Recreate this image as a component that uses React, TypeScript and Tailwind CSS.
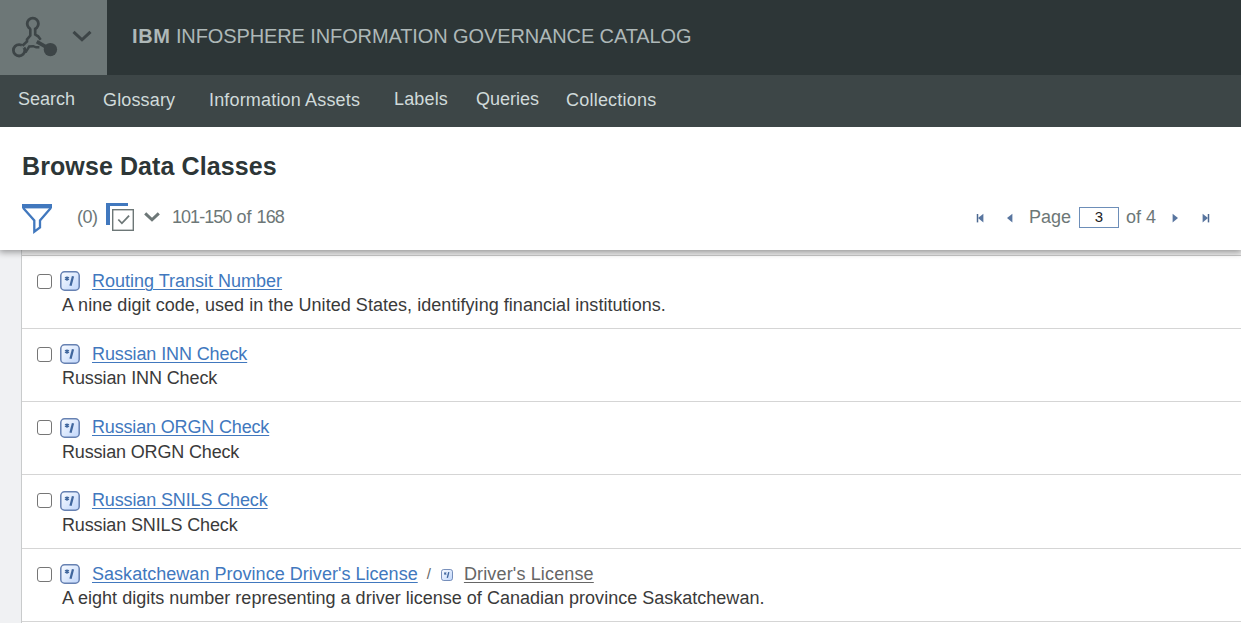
import React from 'react';

type DataClass = { name: string; text: string; parent?: string; nameClass: string; textClass: string; rowClass: string; iconClass: string };

const rows: DataClass[] = [
  { name: 'Routing Transit Number', text: 'A nine digit code, used in the United States, identifying financial institutions.', nameClass: '', textClass: 'tracking-[0.043px]', rowClass: 'h-[73px]', iconClass: 'ml-2' },
  { name: 'Russian INN Check', text: 'Russian INN Check', nameClass: 'tracking-[-0.11px]', textClass: 'tracking-[-0.11px]', rowClass: 'h-[73px]', iconClass: 'ml-2' },
  { name: 'Russian ORGN Check', text: 'Russian ORGN Check', nameClass: 'tracking-[-0.16px]', textClass: 'mt-px tracking-[-0.16px]', rowClass: 'h-[73px]', iconClass: 'ml-2 mt-0.5' },
  { name: 'Russian SNILS Check', text: 'Russian SNILS Check', nameClass: 'tracking-[-0.13px]', textClass: 'mt-px tracking-[-0.13px]', rowClass: 'h-[74px]', iconClass: 'ml-2 mt-0.5' },
  { name: "Saskatchewan Province Driver's License", text: 'A eight digits number representing a driver license of Canadian province Saskatchewan.', parent: "Driver's License", nameClass: 'tracking-[0.03px]', textClass: 'tracking-[0.012px]', rowClass: 'h-[73px]', iconClass: 'ml-2' },
];

const nav = [
  { label: 'Search', className: 'w-[85px] pb-px' },
  { label: 'Glossary', className: 'w-[106px] pt-px tracking-[0.15px]' },
  { label: 'Information Assets', className: 'w-[185px] pt-px tracking-[0.17px]' },
  { label: 'Labels', className: 'w-[82px] pb-px tracking-[0.15px]' },
  { label: 'Queries', className: 'w-[90px] pb-px' },
  { label: 'Collections', className: 'pt-px tracking-[0.22px]' },
];

function Logo() {
  return (
    <svg width="46" height="42" viewBox="0 0 46 42" fill="none" stroke="#3d4547" strokeWidth="2.8" className="shrink-0">
      <circle cx="20.8" cy="7.8" r="5.6" />
      <circle cx="7.1" cy="34.3" r="5.7" />
      <path d="M20.4 11v8M10 31.4l6-5.4" stroke="#6d7777" strokeWidth="3" />
      <path d="M18.3 12.5V19.5L15 23.4V25.5L10.4 29.8" strokeWidth="2.6" />
      <path d="M23.2 12.5v6l2.9 1.8 2.6 3.4" strokeWidth="2.6" />
      <path d="M12.3 35.8h1.6l3.3-5.3 4-.3 3 1.1h3.2" strokeWidth="2.4" />
      <path d="M24.8 25.6l10 5.8" strokeWidth="3.6" />
      <circle cx="38.4" cy="33.6" r="6.7" fill="#3d4547" stroke="none" />
    </svg>
  );
}

function ClassIcon({ small = false }: { small?: boolean }) {
  return (
    <svg width={small ? 12 : 20} height={small ? 12 : 20} viewBox="0 0 20 20" className="block shrink-0">
      <defs>
        <linearGradient id="tile" x1="0" y1="0" x2="1" y2="1">
          <stop offset="0" stopColor="#fafcff" />
          <stop offset="1" stopColor="#c0d6fb" />
        </linearGradient>
      </defs>
      <rect x=".8" y=".8" width="18.4" height="18.4" rx="3.8" fill="url(#tile)" stroke="#6681b2" strokeWidth="1.5" />
      <path d="M7 5.4v4.4M5 6.4l4 2.3M9 6.4l-4 2.3" stroke="#41679e" strokeWidth="1.5" />
      <path d="M13 5.3l-2.5 9.5" stroke="#41679e" strokeWidth="2.3" />
    </svg>
  );
}

function Arrow({ flip = false, bar = false }: { flip?: boolean; bar?: boolean }) {
  return (
    <svg width="8" height="10" viewBox="0 0 8 10" className={flip ? 'block shrink-0 -scale-x-100' : 'block shrink-0'}>
      {bar && <path d="M1.5 1v8.4" stroke="#4c6890" strokeWidth="1.5" />}
      <path d="M7.4.8v8.6L2 5.1z" fill="#58759f" />
    </svg>
  );
}

export default function App() {
  return (
    <div className="flex h-[623px] w-[1241px] flex-col overflow-hidden bg-[#f0f1f3] font-['Liberation_Sans',Arial,sans-serif] text-[18px]">
      <header className="relative z-20 flex h-[75px] shrink-0 bg-[#2d3637]">
        <div className="flex w-[107px] bg-[#6d7777] pl-3 pt-4">
          <Logo />
          <svg width="20" height="12" viewBox="0 0 20 12" className="ml-[14px] mt-[14px] shrink-0" fill="none" stroke="#3d4547" strokeWidth="3">
            <path d="M1.5 1.8L10 9.8l8.5-8" />
          </svg>
        </div>
        <div className="ml-[25px] mt-6 whitespace-nowrap text-[20px] leading-6 tracking-[-0.11px] text-[#aeb8b8]">
          <b className="tracking-[0.6px]">IBM</b> INFOSPHERE INFORMATION GOVERNANCE CATALOG
        </div>
      </header>
      <nav className="relative z-20 flex h-[52px] shrink-0 items-center bg-[#3d4647] pb-[4px] pl-[18px] leading-6 text-[#d0dada]">
        {nav.map((n) => (
          <a key={n.label} className={`block shrink-0 whitespace-nowrap ${n.className}`}>{n.label}</a>
        ))}
      </nav>
      <section className="relative z-10 flex h-[123px] shrink-0 flex-col bg-white shadow-[0_1px_7px_1px_rgba(0,0,0,0.4)]">
        <h1 className="ml-[22px] mt-6 text-[25px] font-bold leading-[30px] tracking-[0.1px] text-[#2d3637]">Browse Data Classes</h1>
        <div className="mt-[23px] flex h-[30px] items-start pl-[22px] leading-[26px] text-[#6d7777]">
          <svg width="30" height="30" viewBox="0 0 30 30" className="shrink-0" fill="none" stroke="#4178be">
            <path d="M1.2 4L12.3 16.5v11.2L18 23.5v-7L28.8 4" strokeWidth="2.3" />
            <path d="M0 2.2h30" strokeWidth="4.4" />
          </svg>
          <span className="ml-[25px] w-[29px] tracking-[-0.5px]">(0)</span>
          <svg width="28" height="28" viewBox="0 0 28 28" className="-mt-px shrink-0" fill="none">
            <path d="M0 0H22V3H4V22H0z" fill="#4178be" />
            <rect x="6.7" y="6.7" width="20.6" height="20.6" fill="white" stroke="#6d7777" strokeWidth="1.4" />
            <path d="M12.3 16.5l3.6 3.8 7.2-7.6" stroke="#6d7777" strokeWidth="1.8" />
          </svg>
          <svg width="16" height="10" viewBox="0 0 16 10" className="ml-[10px] mt-2 shrink-0" fill="none" stroke="#6d7777" strokeWidth="3">
            <path d="M1.2 1.4L8 7.8l6.8-6.4" />
          </svg>
          <span className="ml-3 whitespace-nowrap"><span className="tracking-[-0.95px]">101-150</span> of <span className="tracking-[-0.8px]">168</span></span>
          <div className="ml-auto mr-[31px] flex h-[26px] items-center">
            <span className="mt-0.5"><Arrow bar /></span>
            <span className="ml-[21px] mt-0.5"><Arrow /></span>
            <span className="ml-4">Page</span>
            <input readOnly value="3" aria-label="Page" className="ml-2 block h-[21px] w-10 rounded-none border border-[#6d8eb8] bg-white p-0 text-center text-[15px] text-[#222]" />
            <span className="ml-[7px]">of 4</span>
            <span className="ml-4 mt-0.5"><Arrow flip /></span>
            <span className="ml-[22px] mt-0.5"><Arrow flip bar /></span>
          </div>
        </div>
      </section>
      <main className="ml-[21px] flex-1 border-l border-[#c9cbcc] bg-white">
        <div className="h-[6px] border-b border-[#c8c8c8] bg-[#eeeeee]" />
        {rows.map((r) => (
          <div key={r.name} className={`border-b border-[#d5d5d5] pl-[15px] pt-[13px] leading-6 ${r.rowClass}`}>
            <div className="flex h-6 items-center whitespace-nowrap">
              <span className="mt-px block h-[15px] w-[15px] shrink-0 rounded-[3px] border-[1.5px] border-[#767676]" />
              <span className={r.iconClass}><ClassIcon /></span>
              <a className={`ml-3 text-[#4178be] underline decoration-1 underline-offset-2 ${r.nameClass}`}>{r.name}</a>
              {r.parent && (
                <>
                  <span className="ml-[9px] text-[15px] text-[#666]">/</span>
                  <span className="ml-[10px] mt-0.5"><ClassIcon small /></span>
                  <a className="ml-[11px] tracking-[0.15px] text-[#666] underline decoration-1 underline-offset-2">{r.parent}</a>
                </>
              )}
            </div>
            <div className={`ml-[25px] whitespace-nowrap text-[#3a3a3a] ${r.textClass}`}>{r.text}</div>
          </div>
        ))}
      </main>
    </div>
  );
}
